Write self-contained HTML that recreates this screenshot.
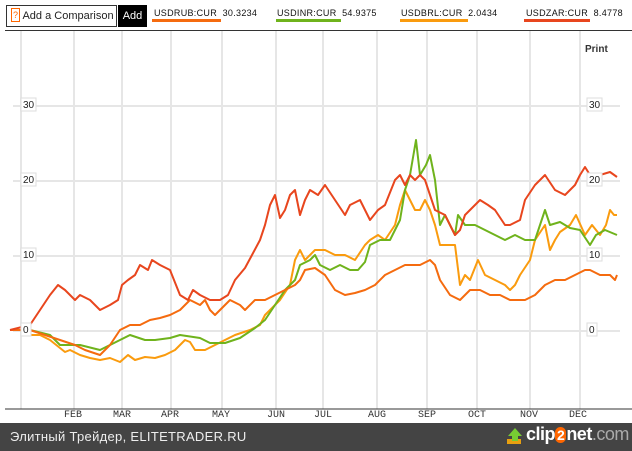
<!DOCTYPE html>
<html><head><meta charset="utf-8"><style>
*{margin:0;padding:0;box-sizing:border-box}
body{width:632px;height:451px;background:#fff;position:relative;overflow:hidden;font-family:"Liberation Sans",sans-serif}
.t{position:absolute;font-size:9px;color:#111;white-space:nowrap;letter-spacing:.3px}
</style></head><body>
<div style="position:absolute;left:6px;top:5px;width:111px;height:22px;border:1px solid #333;font-size:11px;line-height:20px;padding-left:4px;color:#222"><span style="color:#f60;border:1px solid #f60;font-size:9px;padding:0 1px;line-height:12px;display:inline-block;vertical-align:1px">?</span> Add a Comparison</div>
<div style="position:absolute;left:118px;top:5px;width:29px;height:22px;background:#000;color:#fff;font-size:11px;line-height:22px;text-align:center">Add</div>
<div class="t" style="left:154px;top:8px">USDRUB:CUR&nbsp; 30.3234</div>
<div style="position:absolute;left:152px;top:19px;width:69px;height:3px;background:#f56b0f"></div>
<div class="t" style="left:277px;top:8px">USDINR:CUR&nbsp; 54.9375</div>
<div style="position:absolute;left:276px;top:19px;width:65px;height:3px;background:#6fb31c"></div>
<div class="t" style="left:401px;top:8px">USDBRL:CUR&nbsp; 2.0434</div>
<div style="position:absolute;left:400px;top:19px;width:68px;height:3px;background:#fa9b0e"></div>
<div class="t" style="left:526px;top:8px">USDZAR:CUR&nbsp; 8.4778</div>
<div style="position:absolute;left:524px;top:19px;width:66px;height:3px;background:#e8461e"></div>
<div style="position:absolute;left:5px;top:30px;width:627px;height:1px;background:#333"></div>
<div style="position:absolute;left:585px;top:44px;font-size:10px;font-weight:bold;color:#333">Print</div>
<svg width="632" height="451" style="position:absolute;left:0;top:0">
<g stroke="#e6e6e6" stroke-width="2">
<line x1="21" y1="31" x2="21" y2="409"/><line x1="74" y1="31" x2="74" y2="409"/><line x1="122" y1="31" x2="122" y2="409"/><line x1="171" y1="31" x2="171" y2="409"/><line x1="222" y1="31" x2="222" y2="409"/><line x1="276" y1="31" x2="276" y2="409"/><line x1="323" y1="31" x2="323" y2="409"/><line x1="377" y1="31" x2="377" y2="409"/><line x1="427" y1="31" x2="427" y2="409"/><line x1="477" y1="31" x2="477" y2="409"/><line x1="530" y1="31" x2="530" y2="409"/><line x1="580" y1="31" x2="580" y2="409"/>
<line x1="13" y1="106" x2="620" y2="106"/><line x1="13" y1="181" x2="620" y2="181"/><line x1="13" y1="256" x2="620" y2="256"/><line x1="13" y1="331" x2="620" y2="331"/>
</g>
<line x1="5" y1="409" x2="632" y2="409" stroke="#333" stroke-width="1"/>
<g fill="none" stroke-width="2" stroke-linejoin="round">
<polyline stroke="#fa9b0e" points="10,330 20,330 30,335 40,335 50,340 65,352 70,350 80,355 90,358 100,360 110,358 120,362 128,355 135,360 145,357 155,358 165,355 175,350 180,345 185,340 190,342 195,350 205,350 215,345 225,340 235,335 250,330 260,325 265,315 275,305 280,300 290,285 295,260 300,250 305,260 315,250 325,250 335,255 345,255 355,260 365,245 370,240 378,235 385,240 395,225 400,205 405,190 410,200 415,210 420,210 425,200 430,210 435,225 440,245 445,245 455,245 460,285 465,275 470,280 478,260 485,275 495,280 505,285 510,290 515,285 520,275 530,260 535,240 545,225 550,250 555,240 560,232 570,225 576,215 585,235 592,225 600,235 606,225 610,210 614,215 617,215"/>
<polyline stroke="#6fb31c" points="10,330 30,330 50,335 60,345 70,345 80,345 100,350 110,345 120,340 130,335 145,340 155,340 170,338 180,335 200,338 210,343 225,343 240,338 255,328 265,320 275,305 285,290 295,280 300,265 310,260 315,255 320,265 330,270 340,265 350,270 358,270 365,262 370,245 380,240 390,240 400,220 405,190 410,175 416,140 420,175 426,165 430,155 435,180 440,225 445,215 455,235 458,215 465,225 475,225 485,230 495,235 505,240 515,235 525,240 535,240 540,225 545,210 550,225 560,222 570,228 580,230 590,245 596,235 605,230 617,235"/>
<polyline stroke="#f56b0f" points="10,330 30,330 45,335 60,340 75,345 85,350 100,355 110,345 120,330 130,325 140,325 150,320 160,318 170,315 180,310 190,300 200,305 205,300 210,310 215,315 225,305 230,300 240,305 245,310 255,300 265,300 275,295 285,290 295,285 300,280 305,270 315,268 325,275 335,290 345,295 355,293 365,290 375,285 385,275 395,270 405,265 410,265 420,265 430,260 435,265 440,280 450,295 460,300 470,290 480,290 490,295 500,295 510,300 525,300 535,295 545,285 555,280 565,280 575,275 585,270 590,270 600,275 610,275 615,280 617,275"/>
<polyline stroke="#e8461e" points="10,330 30,325 40,310 50,295 58,285 65,290 75,300 80,295 90,300 100,310 110,305 118,300 122,285 128,280 135,275 140,265 148,270 152,260 160,265 170,270 180,295 188,300 193,290 200,295 210,300 220,300 228,295 235,280 245,268 252,255 260,240 265,225 270,205 275,195 280,218 285,210 290,195 295,190 300,215 305,200 310,190 318,195 325,185 335,200 345,215 350,205 360,200 370,220 378,210 385,205 395,180 400,175 405,185 410,175 415,180 420,175 425,180 430,195 435,210 445,215 455,235 460,230 465,215 475,205 480,200 488,205 495,210 505,225 510,225 520,220 525,200 535,185 545,175 555,190 565,195 575,185 580,175 585,167 590,175 600,175 610,172 617,177"/>
</g>
<g font-family="Liberation Sans,sans-serif" font-size="10" fill="#222">
<rect x="21" y="98" width="15" height="13" fill="#fff" stroke="#ddd"/><text x="23" y="108">30</text>
<rect x="21" y="173" width="15" height="13" fill="#fff" stroke="#ddd"/><text x="23" y="183">20</text>
<rect x="21" y="248" width="15" height="13" fill="#fff" stroke="#ddd"/><text x="23" y="258">10</text>
<rect x="21" y="323" width="10" height="13" fill="#fff" stroke="#ddd"/><text x="23" y="333">0</text>
<rect x="587" y="98" width="15" height="13" fill="#fff" stroke="#ddd"/><text x="589" y="108">30</text>
<rect x="587" y="173" width="15" height="13" fill="#fff" stroke="#ddd"/><text x="589" y="183">20</text>
<rect x="587" y="248" width="15" height="13" fill="#fff" stroke="#ddd"/><text x="589" y="258">10</text>
<rect x="587" y="323" width="10" height="13" fill="#fff" stroke="#ddd"/><text x="589" y="333">0</text>
</g>
<g font-family="Liberation Mono,monospace" font-size="10" fill="#333" text-anchor="middle">
<text x="73" y="417">FEB</text><text x="122" y="417">MAR</text><text x="170" y="417">APR</text><text x="221" y="417">MAY</text><text x="276" y="417">JUN</text><text x="323" y="417">JUL</text><text x="377" y="417">AUG</text><text x="427" y="417">SEP</text><text x="477" y="417">OCT</text><text x="529" y="417">NOV</text><text x="578" y="417">DEC</text>
</g>
</svg>
<div style="position:absolute;left:0;top:423px;width:632px;height:28px;background:#444"></div>
<div style="position:absolute;left:10px;top:429px;font-size:13px;color:#eee;letter-spacing:.3px">Элитный Трейдер, ELITETRADER.RU</div>
<svg width="20" height="20" style="position:absolute;left:505px;top:426px"><rect x="2" y="13" width="14" height="5" fill="#e8a010"/><polygon points="10,2 17,10 13,10 13,15 7,15 7,10 3,10" fill="#7c3"/></svg>
<div style="position:absolute;left:526px;top:424px;font-size:18px;font-weight:bold;color:#fff;letter-spacing:-.5px">clip<span style="color:#fff;background:#f60;border-radius:8px;padding:0 2px;font-size:14px">2</span>net<span style="color:#aaa;font-weight:normal">.com</span></div>
</body></html>
